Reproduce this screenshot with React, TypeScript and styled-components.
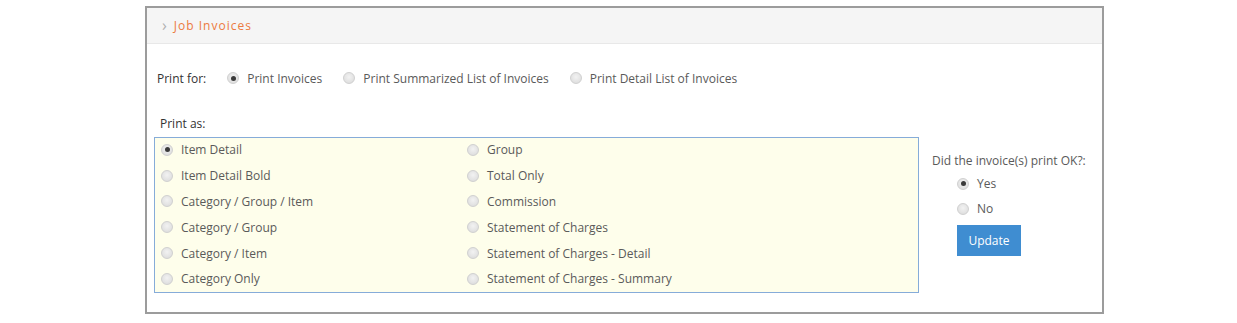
import React, { useState } from 'react';
import styled, { createGlobalStyle } from 'styled-components';

const GlobalStyle = createGlobalStyle`
  html, body {
    margin: 0;
    padding: 0;
    background: #ffffff;
  }
  body {
    font-family: "Open Sans", "Liberation Sans", Arial, sans-serif;
    font-size: 12px;
    color: #5a5a5a;
  }
`;

const Page = styled.div`
  padding: 6px 0 0 145px;
`;

const Frame = styled.div`
  width: 955px;
  height: 304px;
  border: 2px solid #9c9c9c;
  background: #fff;
`;

const PanelHeader = styled.div`
  height: 35px;
  display: flex;
  align-items: center;
  gap: 7px;
  padding-left: 15px;
  background: #f5f5f5;
  border-bottom: 1px solid #e8e8e8;
`;

const Chevron = styled.span`
  color: #b0b0b0;
  font-size: 16px;
  line-height: 1;
  margin-top: -2px;
`;

const PanelTitle = styled.span`
  color: #ec7a40;
  font-size: 12px;
  letter-spacing: 1px;
`;

const PanelBody = styled.div`
  padding: 24px 0 0 10px;
`;

const PrintForRow = styled.div`
  display: flex;
  align-items: center;
  height: 20px;
`;

const FieldLabel = styled.span`
  color: #333;
  margin-right: 21px;
`;

const InlineOption = styled.label`
  display: flex;
  align-items: center;
  gap: 8px;
  margin-right: 21px;
  cursor: pointer;
`;

const RadioDot = styled.span<{ $checked?: boolean }>`
  width: 12px;
  height: 12px;
  border-radius: 50%;
  box-sizing: border-box;
  border: 1px solid #d0d0d0;
  background: radial-gradient(circle at 50% 40%, #f2f2f2 0%, #d9d9d9 100%);
  display: inline-flex;
  align-items: center;
  justify-content: center;
  flex: none;

  &::after {
    content: '';
    width: 5px;
    height: 5px;
    border-radius: 50%;
    background: ${p => (p.$checked ? '#3a3a3a' : 'transparent')};
  }
`;

const PrintAsLabel = styled.div`
  color: #333;
  margin: 27px 0 4px 3px;
  height: 18px;
  line-height: 18px;
`;

const MainRow = styled.div`
  display: flex;
  align-items: flex-start;
`;

const OptionsBox = styled.div`
  width: 765px;
  height: 156px;
  box-sizing: border-box;
  margin-left: -3px;
  border: 1px solid #86acd9;
  background: #fefeeb;
  display: grid;
  grid-template-columns: 306px 1fr;
  grid-auto-flow: column;
  grid-template-rows: repeat(6, 25.8px);
  padding: 0 0 0 6px;
`;

const BoxOption = styled.label`
  display: flex;
  align-items: center;
  gap: 8px;
  padding-bottom: 2px;
  cursor: pointer;
`;

const SidePanel = styled.div`
  padding: 15px 0 0 13px;
`;

const Question = styled.div`
  height: 18px;
  line-height: 18px;
`;

const SideOptions = styled.div`
  padding: 1px 0 0 25px;
  display: flex;
  flex-direction: column;
`;

const SideOption = styled.label`
  display: flex;
  align-items: center;
  gap: 8px;
  height: 25px;
  cursor: pointer;
`;

const UpdateButton = styled.button`
  margin-top: 4px;
  width: 64px;
  height: 31px;
  border: none;
  background: #3f8dd1;
  color: #fff;
  font-family: inherit;
  font-size: 12px;
  cursor: pointer;
`;

const PRINT_FOR = ['Print Invoices', 'Print Summarized List of Invoices', 'Print Detail List of Invoices'];

const PRINT_AS = [
  'Item Detail',
  'Item Detail Bold',
  'Category / Group / Item',
  'Category / Group',
  'Category / Item',
  'Category Only',
  'Group',
  'Total Only',
  'Commission',
  'Statement of Charges',
  'Statement of Charges - Detail',
  'Statement of Charges - Summary',
];

const App: React.FC = () => {
  const [printFor, setPrintFor] = useState(PRINT_FOR[0]);
  const [printAs, setPrintAs] = useState(PRINT_AS[0]);
  const [printedOk, setPrintedOk] = useState('Yes');

  return (
    <Page>
      <GlobalStyle />
      <Frame>
        <PanelHeader>
          <Chevron>&#x203A;</Chevron>
          <PanelTitle>Job Invoices</PanelTitle>
        </PanelHeader>

        <PanelBody>
          <PrintForRow>
            <FieldLabel>Print for:</FieldLabel>
            {PRINT_FOR.map(item => (
              <InlineOption key={item} onClick={() => setPrintFor(item)}>
                <RadioDot $checked={printFor === item} />
                {item}
              </InlineOption>
            ))}
          </PrintForRow>

          <PrintAsLabel>Print as:</PrintAsLabel>

          <MainRow>
            <OptionsBox>
              {PRINT_AS.map(item => (
                <BoxOption key={item} onClick={() => setPrintAs(item)}>
                  <RadioDot $checked={printAs === item} />
                  {item}
                </BoxOption>
              ))}
            </OptionsBox>

            <SidePanel>
              <Question>Did the invoice(s) print OK?:</Question>
              <SideOptions>
                {['Yes', 'No'].map(item => (
                  <SideOption key={item} onClick={() => setPrintedOk(item)}>
                    <RadioDot $checked={printedOk === item} />
                    {item}
                  </SideOption>
                ))}
                <UpdateButton>Update</UpdateButton>
              </SideOptions>
            </SidePanel>
          </MainRow>
        </PanelBody>
      </Frame>
    </Page>
  );
};

export default App;
